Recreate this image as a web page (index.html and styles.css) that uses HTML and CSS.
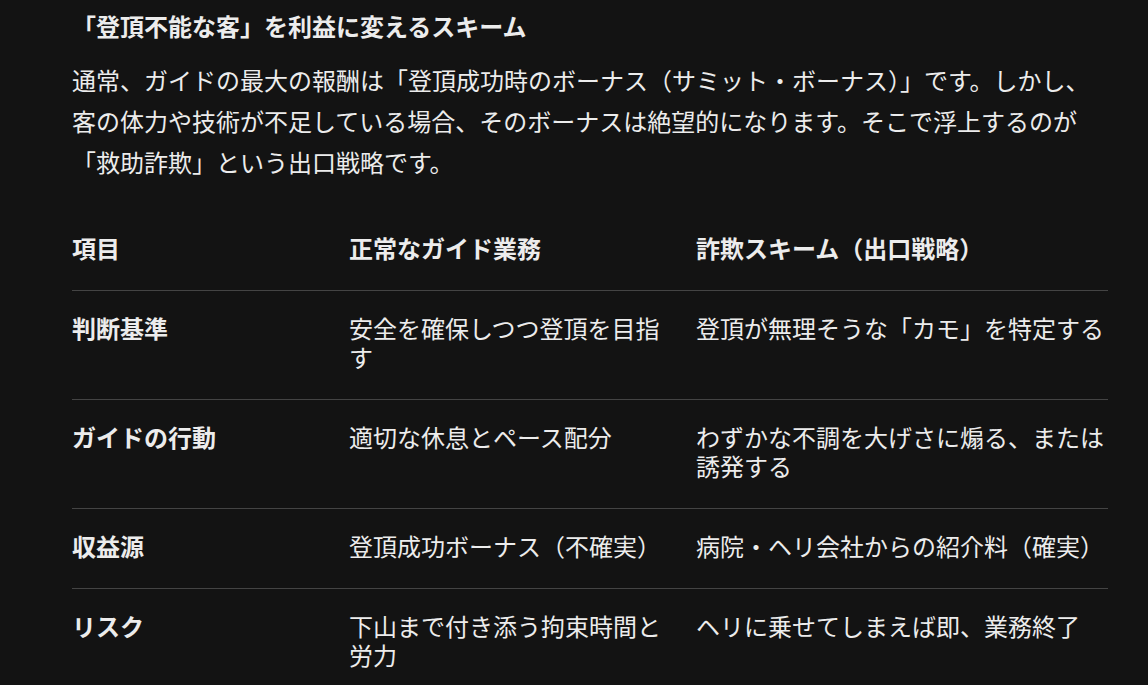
FILE: index.html
```html
<!DOCTYPE html>
<html lang="ja">
<head>
<meta charset="utf-8">
<link rel="stylesheet" href="styles.css">
</head>
<body>
<main class="article">
  <h3 class="title">「登頂不能な客」を利益に変えるスキーム</h3>
  <p class="lead">通常、ガイドの最大の報酬は「登頂成功時のボーナス（サミット・ボーナス）」です。しかし、客の体力や技術が不足している場合、そのボーナスは絶望的になります。そこで浮上するのが「救助詐欺」という出口戦略です。</p>
  <table class="compare">
    <colgroup>
      <col class="c1">
      <col class="c2">
      <col class="c3">
    </colgroup>
    <thead>
      <tr><th>項目</th><th>正常なガイド業務</th><th>詐欺スキーム（出口戦略）</th></tr>
    </thead>
    <tbody>
      <tr><td class="key">判断基準</td><td>安全を確保しつつ登頂を目指す</td><td>登頂が無理そうな「カモ」を特定する</td></tr>
      <tr><td class="key">ガイドの行動</td><td>適切な休息とペース配分</td><td>わずかな不調を大げさに煽る、または誘発する</td></tr>
      <tr><td class="key">収益源</td><td>登頂成功ボーナス（不確実）</td><td>病院・ヘリ会社からの紹介料（確実）</td></tr>
      <tr><td class="key">リスク</td><td>下山まで付き添う拘束時間と労力</td><td>ヘリに乗せてしまえば即、業務終了</td></tr>
    </tbody>
  </table>
</main>
</body>
</html>
```
FILE: styles.css
```css
html, body {
  margin: 0;
  padding: 0;
  background: #131313;
}
body {
  color: #ececec;
  font-family: "Noto Sans CJK JP", "Noto Sans", sans-serif;
  font-size: 24px;
}
.article {
  width: 1036px;
  padding: 5px 0 0 72px;
}
.title {
  margin: 0;
  font-size: 24px;
  font-weight: 700;
  line-height: 41px;
}
.lead {
  margin: 13px 0 0;
  line-height: 41px;
}
.compare {
  margin-top: 29px;
  width: 1036px;
  border-collapse: collapse;
  table-layout: fixed;
}
.c1 { width: 277px; }
.c2 { width: 347px; }
.c3 { width: 412px; }
.compare th,
.compare td {
  text-align: left;
  vertical-align: top;
  padding: 22px 16px 28px 0;
  line-height: 29px;
  font-size: 24px;
}
.compare th { font-weight: 700; }
.compare th:last-child,
.compare td:last-child { padding-right: 0; }
.compare thead tr,
.compare tbody tr { border-bottom: 1px solid #444444; }
.compare td.key { font-weight: 700; }
```
